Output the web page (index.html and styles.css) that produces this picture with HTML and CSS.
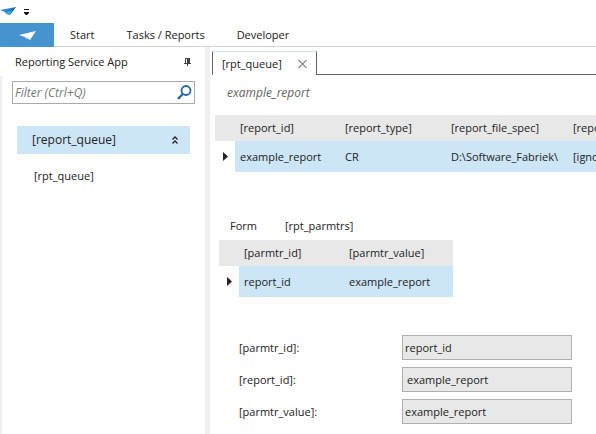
FILE: index.html
```
<!DOCTYPE html>
<html lang="en">
<head>
<meta charset="UTF-8">
<title>Reporting Service App</title>
<link rel="stylesheet" href="styles.css">
</head>

<body>
	<div class="app">

		<!-- quick access bar -->
		<div class="titlebar">
			<svg class="logo" width="16" height="9" viewBox="0 0 16 9">
				<path d="M0 3 L16 0 L10 5 L5 5 Z" fill="#2e86cc"/>
				<path d="M16 0 L10 8 L5 5 Z" fill="#1c62b0"/>
				<path d="M5 5 L12 3 L10 8 L6 7 Z" fill="#35a8e4"/>
			</svg>
			<button type="button" class="quick" aria-label="Customize">
				<svg width="5" height="6" viewBox="0 0 5 6"><path d="M0 0 H5 V1 H0 Z M0 3 H5 V4 L3 6 H2 L0 4 Z" fill="#111"/></svg>
			</button>
		</div>

		<nav class="ribbon">
			<button type="button" class="file" aria-label="File">
				<svg width="17" height="9" viewBox="0 0 17 9">
					<path d="M0 4 L17 0 L11 9 L6 6 Z" fill="#fff"/>
					<path d="M6 6 L10 4 L7 8 Z" fill="#d5e8f6"/>
				</svg>
			</button>
			<a href="#start">Start</a>
			<a href="#tasks">Tasks / Reports</a>
			<a href="#developer">Developer</a>
		</nav>

		<div class="main">
			<aside class="sidebar">
				<div class="side-head">
					<span>Reporting Service App</span>
					<button type="button" aria-label="Pin">
						<svg width="7" height="8" viewBox="0 0 7 8"><path d="M1 0 H6 V5 H7 V6 H4 V8 H3 V6 H0 V5 H1 Z M2 1 V5 H3 V1 Z" fill="#444" fill-rule="evenodd"/></svg>
					</button>
				</div>
				<div class="side-body">
					<div class="search">
						<input type="text" placeholder="Filter (Ctrl+Q)" aria-label="Filter">
						<button type="button" aria-label="Search">
							<svg width="15" height="15" viewBox="0 0 15 15" fill="none" stroke="#2568b0">
								<circle cx="9" cy="5.5" r="4.5" stroke-width="1.8"/>
								<path d="M5.7 9 L1 14" stroke-width="2.4"/>
							</svg>
						</button>
					</div>
					<button type="button" class="group">
						<span>[report_queue]</span>
						<svg width="6" height="8" viewBox="0 0 6 8" fill="none" stroke="#222" stroke-width="1.3">
							<path d="M0.5 3.5 L3 1 L5.5 3.5 M0.5 7.5 L3 5 L5.5 7.5"/>
						</svg>
					</button>
					<a href="#rpt_queue" class="item">[rpt_queue]</a>
				</div>
			</aside>

			<main class="content">
				<div class="tabs">
					<div class="tab">
						<a href="#rpt_queue">[rpt_queue]</a>
						<button type="button" aria-label="Close">
							<svg width="9" height="8" viewBox="0 0 9 8" stroke="#888" stroke-width="1.2"><path d="M0.5 0 L8.5 8 M8.5 0 L0.5 8"/></svg>
						</button>
					</div>
				</div>

				<div class="caption">example_report</div>

				<div class="grid-wrap">
					<table class="grid queue">
						<colgroup>
							<col class="c-mark"><col class="c-id"><col class="c-type"><col class="c-spec"><col class="c-id">
						</colgroup>
						<tr>
							<th></th>
							<th>[report_id]</th>
							<th>[report_type]</th>
							<th>[report_file_spec]</th>
							<th>[report_exp]</th>
						</tr>
						<tr>
							<td class="mark"><svg width="5" height="9" viewBox="0 0 5 9"><path d="M0 0 L5 4.5 L0 9 Z" fill="#222"/></svg></td>
							<td>example_report</td>
							<td>CR</td>
							<td>D:\Software_Fabriek\</td>
							<td>[ignore]</td>
						</tr>
					</table>
				</div>

				<div class="subtabs">
					<a href="#form">Form</a>
					<a href="#rpt_parmtrs">[rpt_parmtrs]</a>
				</div>

				<table class="grid parmtrs">
					<colgroup>
						<col class="c-mark"><col class="c-id"><col class="c-value">
					</colgroup>
					<tr>
						<th></th>
						<th>[parmtr_id]</th>
						<th>[parmtr_value]</th>
					</tr>
					<tr>
						<td class="mark"><svg width="5" height="9" viewBox="0 0 5 9"><path d="M0 0 L5 4.5 L0 9 Z" fill="#222"/></svg></td>
						<td>report_id</td>
						<td>example_report</td>
					</tr>
				</table>

				<form class="fields">
					<label for="parmtr_id">[parmtr_id]:</label>
					<input type="text" id="parmtr_id" value="report_id" readonly>
					<label for="report_id">[report_id]:</label>
					<input type="text" id="report_id" class="lookup" value="example_report" readonly>
					<label for="parmtr_value">[parmtr_value]:</label>
					<input type="text" id="parmtr_value" value="example_report" readonly>
				</form>
			</main>
		</div>
	</div>
</body>
</html>
```
FILE: styles.css
```
* {
	box-sizing: border-box;
}

body {
	margin: 0;
	background: #fff;
	color: #222;
	font-family: "Open Sans", "Noto Sans", sans-serif;
	font-size: 11px;
	line-height: 16px;
}

button, input {
	font: inherit;
	color: inherit;
	padding: 0;
	border: none;
	background: none;
}

a {
	color: inherit;
	text-decoration: none;
}

svg {
	display: block;
}

.app {
	display: flex;
	flex-direction: column;
	min-height: 100vh;
	overflow: hidden;
}

.titlebar {
	display: flex;
	align-items: center;
	gap: 8px;
	height: 23px;
}

/* ribbon */
.ribbon {
	display: flex;
	align-items: center;
	height: 24px;
	border-bottom: 1px solid #d5d5d5;
}

.ribbon .file {
	display: flex;
	align-items: center;
	justify-content: center;
	width: 54px;
	height: 24px;
	align-self: flex-start;
	background: #4594cf;
}

.ribbon a {
	padding: 0 16px;
}

.main {
	display: flex;
	flex: 1;
}

/* left panel */
.sidebar {
	display: flex;
	flex-direction: column;
	flex: none;
	width: 210px;
	border-right: 5px solid #f0f0f0;
}

.side-head {
	display: flex;
	align-items: center;
	justify-content: space-between;
	height: 29px;
	padding: 0 14px 0 15px;
}

.side-body {
	flex: 1;
	padding: 5px 10px 0;
	border-left: 2px solid #f0f0f0;
}

.search {
	display: flex;
	align-items: center;
	height: 23px;
	padding: 0 2px;
	border: 1px solid #aaa;
}

.search input {
	flex: 1;
	min-width: 0;
	font-size: 12px;
	font-style: italic;
	outline: none;
}

.search input::placeholder {
	color: #777;
}

.group {
	display: flex;
	align-items: center;
	justify-content: space-between;
	width: 173px;
	height: 28px;
	margin: 22px 5px 0;
	padding: 0 12px 0 15px;
	background: #cce5f7;
	font-size: 12px;
}

.item {
	display: block;
	margin: 14px 22px 0;
}

/* document area */
.content {
	flex: 1;
	min-width: 0;
	padding-top: 4px;
}

.tabs {
	display: flex;
	padding-left: 2px;
}

.tabs::after {
	content: "";
	flex: 1;
	border-bottom: 1px solid #666;
}

.tab {
	display: flex;
	align-items: center;
	justify-content: space-between;
	width: 105px;
	height: 24px;
	padding: 0 9px;
	border: 1px solid #666;
	border-top-color: #cce5f7;
	border-bottom: none;
}

.caption {
	padding: 10px 17px 14px;
	color: #666;
	font-size: 12px;
	font-style: italic;
}

.grid-wrap {
	margin-left: 5px;
	overflow: hidden;
}

.grid {
	table-layout: fixed;
	border-collapse: collapse;
}

.grid.queue {
	width: 458px;
}

.grid.parmtrs {
	width: 234px;
	margin-left: 9px;
}

.c-mark {
	width: 20px;
}

.c-id {
	width: 105px;
}

.c-type {
	width: 106px;
}

.c-spec {
	width: 122px;
}

.grid th, .grid td {
	padding: 0 0 0 5px;
	text-align: left;
	font-weight: normal;
	white-space: nowrap;
}

.grid th {
	height: 26px;
	background: #e8e8e8;
}

.grid td {
	height: 31px;
	background: #cce5f7;
}

.grid td.mark {
	padding-left: 8px;
	background: none;
}

.subtabs {
	display: flex;
	gap: 28px;
	padding: 46px 20px 6px;
}

.fields {
	display: grid;
	grid-template-columns: 163px 170px;
	align-items: center;
	gap: 7px 0;
	padding: 38px 0 10px 29px;
}

.fields input {
	width: 100%;
	height: 25px;
	padding: 0 2px;
	border: 1px solid #b0b0b0;
	background: #e8e8e8;
}

.fields input.lookup {
	padding-left: 4px;
}
```
